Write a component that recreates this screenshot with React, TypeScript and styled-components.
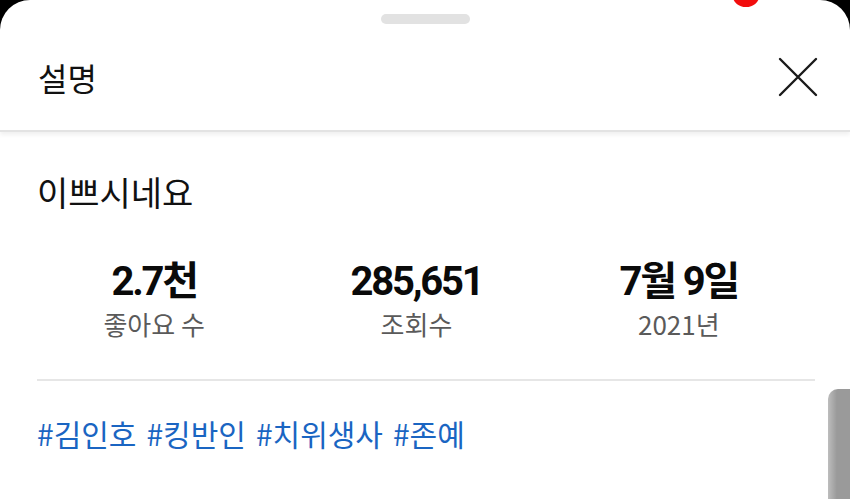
import React from 'react';
import styled, { createGlobalStyle } from 'styled-components';

const GlobalStyle = createGlobalStyle`
  html, body {
    margin: 0;
    padding: 0;
    background: #000;
  }
  body {
    font-family: "Noto Sans CJK KR", "Noto Sans", sans-serif;
  }
`;

const Screen = styled.div`
  width: 850px;
  height: 499px;
  background: #000;
  position: relative;
  overflow: hidden;
`;

const Sheet = styled.div`
  height: 100%;
  background: #fff;
  border-radius: 30px 30px 0 0;
  display: flex;
  flex-direction: column;
`;

const NotifyDot = styled.div`
  position: absolute;
  left: 733px;
  top: -14px;
  width: 26px;
  height: 21px;
  border-radius: 50%;
  background: #f20d0d;
`;

const Handle = styled.div`
  align-self: center;
  width: 89px;
  height: 10px;
  margin-top: 14px;
  border-radius: 5px;
  background: #e2e2e2;
`;

const Header = styled.div`
  height: 106px;
  display: flex;
  align-items: center;
  justify-content: space-between;
  padding: 0 32px 0 38px;
  border-bottom: 2px solid #e3e3e3;
  box-shadow: 0 3px 4px rgba(0, 0, 0, 0.06);
`;

const Title = styled.div`
  font-size: 32px;
  color: #111;
`;

const CloseButton = styled.div`
  width: 40px;
  height: 40px;
  display: flex;
  align-items: center;
  justify-content: center;
`;

const Body = styled.div`
  padding: 0 37px;
  display: flex;
  flex-direction: column;
`;

const Description = styled.div`
  margin-top: 40px;
  font-size: 34px;
  color: #111;
  line-height: 40px;
`;

const Stats = styled.div`
  display: grid;
  grid-template-columns: repeat(3, 1fr);
  margin: 48px 3px 0 -14px;
`;

const Stat = styled.div`
  display: flex;
  flex-direction: column;
  align-items: center;
`;

const StatValue = styled.div`
  font-family: Roboto, "Noto Sans CJK KR", sans-serif;
  font-weight: 700;
  font-size: 40px;
  line-height: 44px;
  color: #0a0a0a;
  letter-spacing: -2.2px;
`;

const StatLabel = styled.div`
  margin-top: 4px;
  font-size: 26px;
  line-height: 32px;
  color: #5a5a5a;
`;

const Divider = styled.div`
  margin-top: 39px;
  height: 2px;
  background: #e6e6e6;
  margin-right: -2px;
`;

const Tags = styled.div`
  margin-top: 33px;
  display: flex;
  gap: 10px;
  font-size: 30px;
  line-height: 38px;
  color: #1a65c2;
`;

const ScrollThumb = styled.div`
  position: absolute;
  right: 0;
  top: 389px;
  width: 22px;
  height: 120px;
  border-radius: 10px 0 0 0;
  background: linear-gradient(to right, #bdbdbd, #9a9a9a 40%, #9a9a9a);
`;

const stats = [
  { value: '2.7천', label: '좋아요 수' },
  { value: '285,651', label: '조회수' },
  { value: '7월 9일', label: '2021년' },
];

const tags = ['#김인호', '#킹반인', '#치위생사', '#존예'];

export default function App() {
  return (
    <Screen>
      <GlobalStyle />
      <Sheet>
        <Handle />
        <Header>
          <Title>설명</Title>
          <CloseButton>
            <svg width="40" height="40" viewBox="0 0 40 40">
              <path d="M2 2 L38 38 M38 2 L2 38" stroke="#1a1a1a" strokeWidth="2.4" strokeLinecap="round" />
            </svg>
          </CloseButton>
        </Header>
        <Body>
          <Description>이쁘시네요</Description>
          <Stats>
            {stats.map((s) => (
              <Stat key={s.label}>
                <StatValue>{s.value}</StatValue>
                <StatLabel>{s.label}</StatLabel>
              </Stat>
            ))}
          </Stats>
          <Divider />
          <Tags>
            {tags.map((t) => (
              <span key={t}>{t}</span>
            ))}
          </Tags>
        </Body>
      </Sheet>
      <NotifyDot />
      <ScrollThumb />
    </Screen>
  );
}
